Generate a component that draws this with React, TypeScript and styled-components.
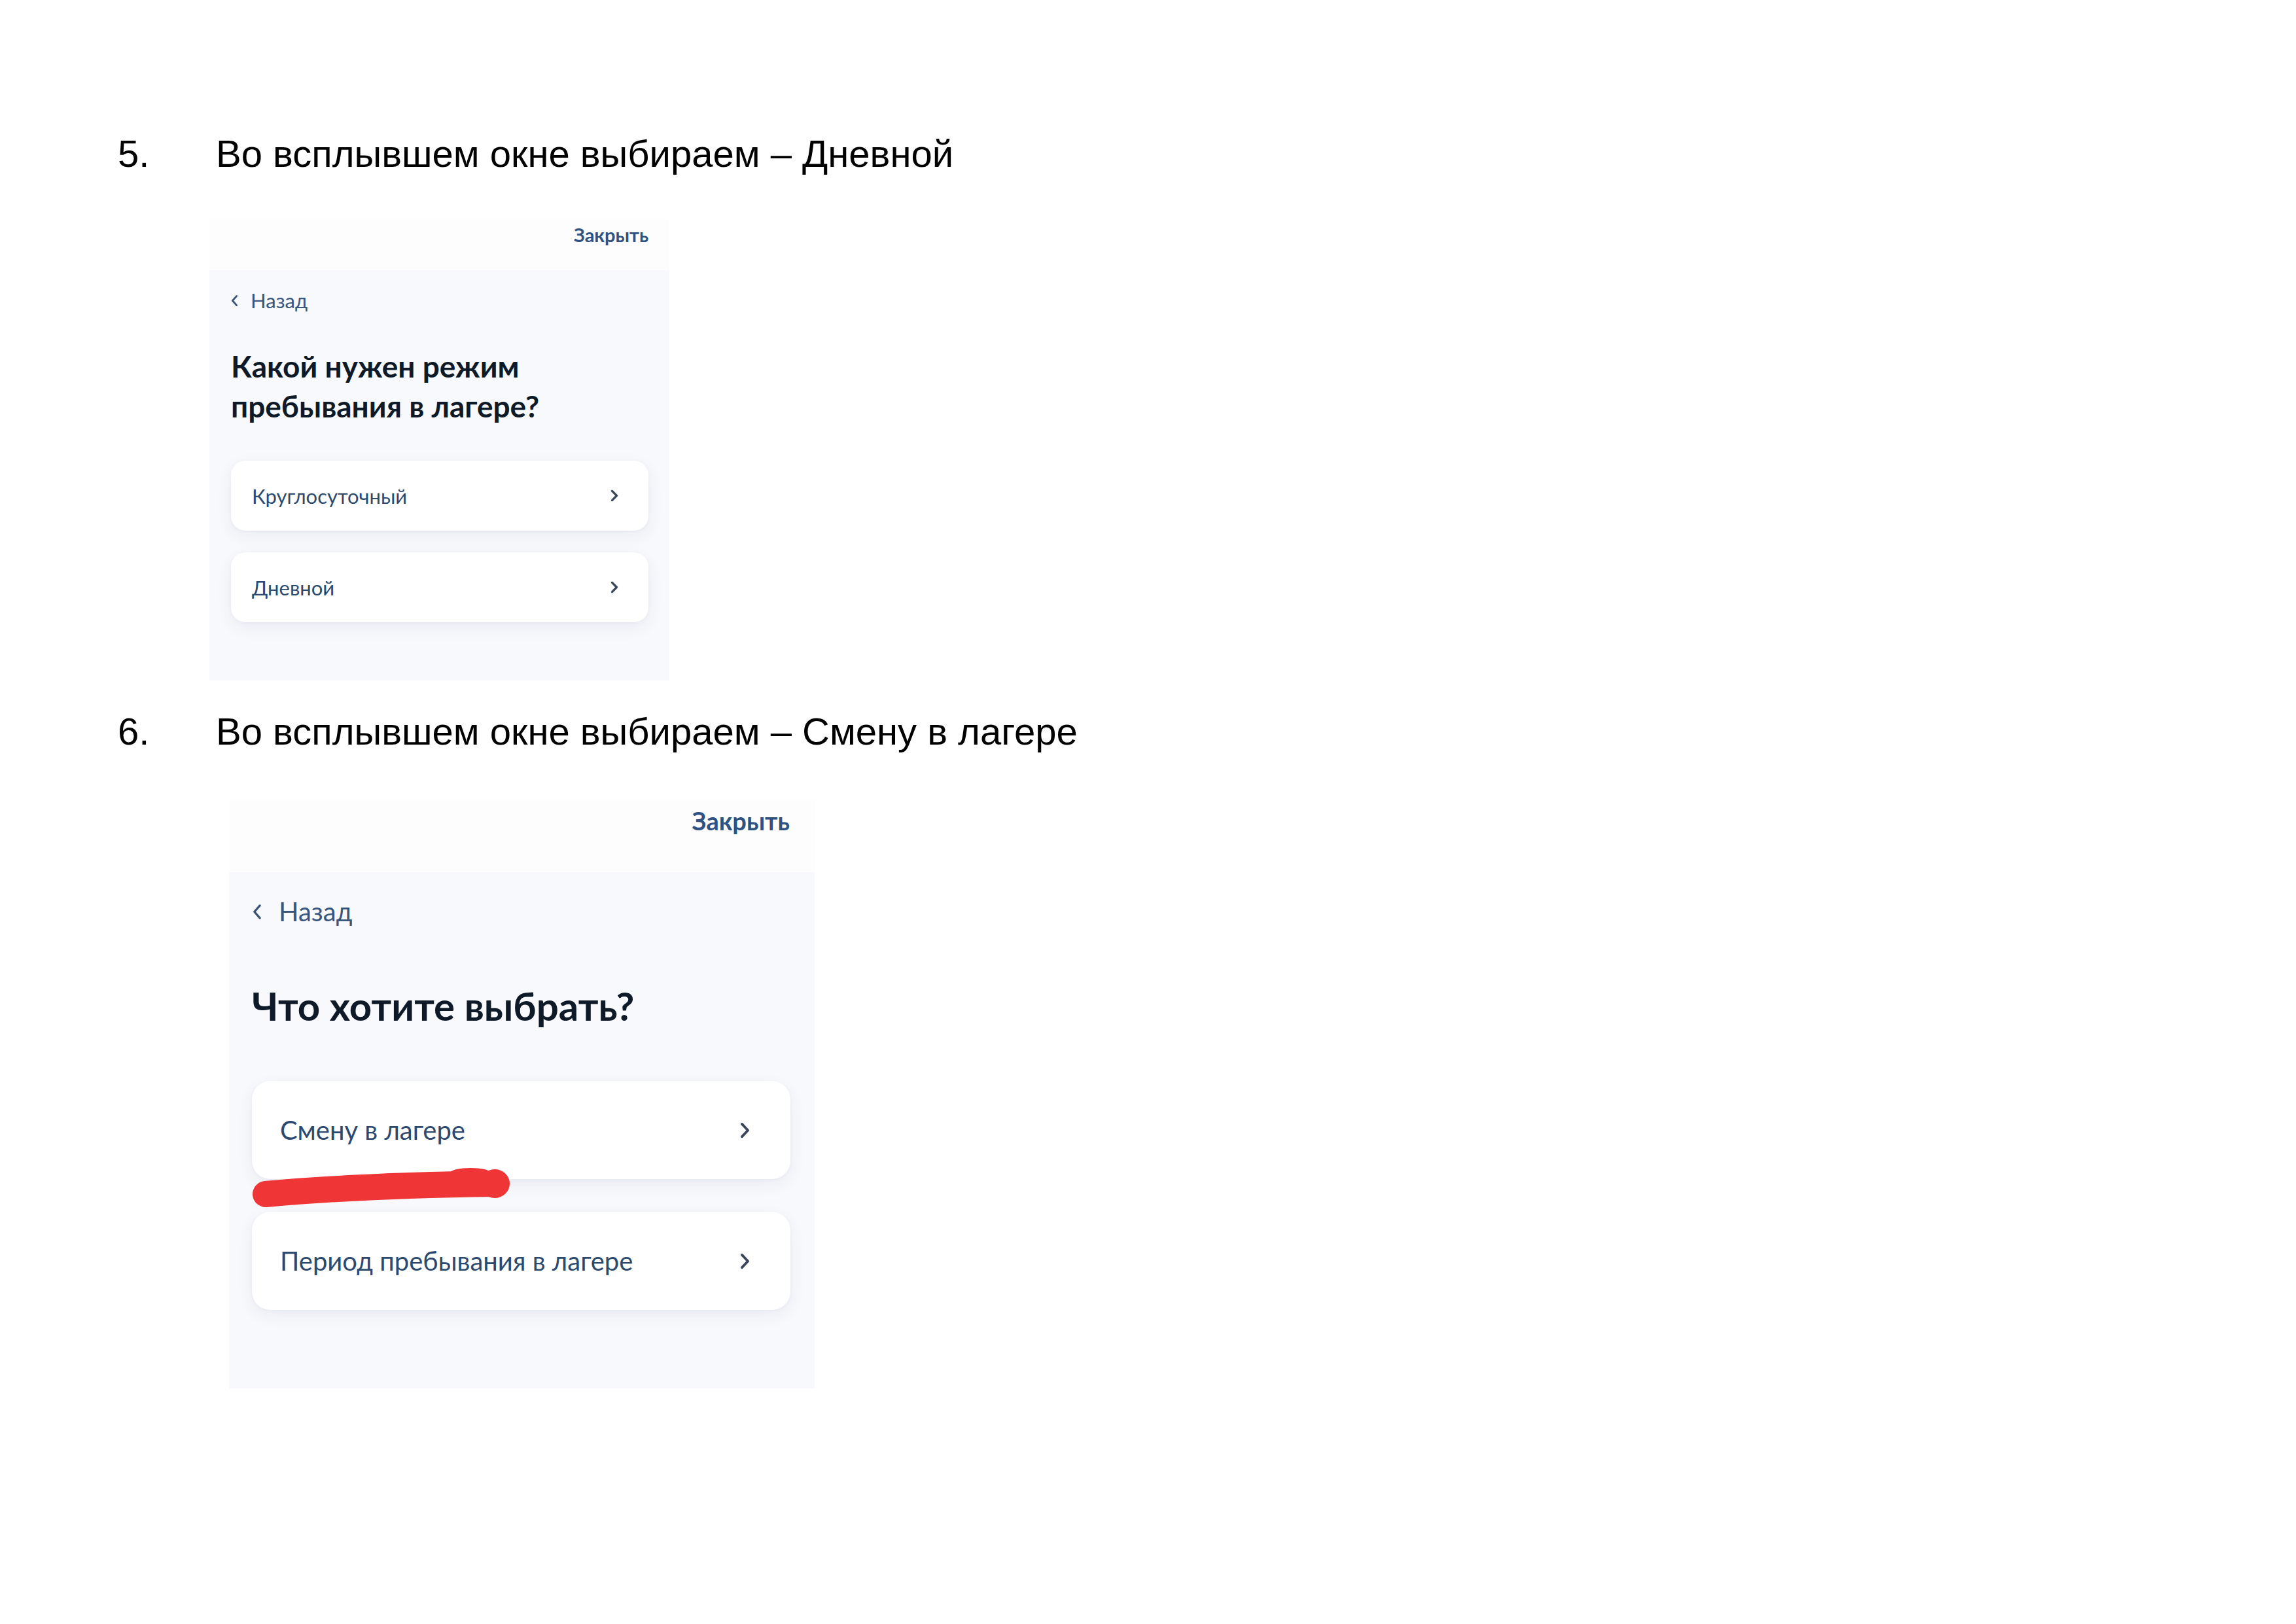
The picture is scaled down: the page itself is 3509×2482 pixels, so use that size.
import React from "react";
import styled, { createGlobalStyle, ThemeProvider } from "styled-components";

const GlobalStyle = createGlobalStyle`
  html, body {
    margin: 0;
    padding: 0;
    background: #ffffff;
  }
  body {
    font-family: "Liberation Sans", Arial, sans-serif;
  }
`;

interface SheetTheme {
  width: number;
  height: number;
  headerH: number;
  headerPadTop: number;
  closeSize: number;
  closeLine: number;
  closeRight: number;
  padLeft: number;
  padRight: number;
  backPadTop: number;
  backSize: number;
  backLine: number;
  backIndent: number;
  backGap: number;
  backIconW: number;
  backIconH: number;
  titleGap: number;
  titleSize: number;
  titleLine: number;
  listGap: number;
  cardH: number;
  cardGap: number;
  cardRadius: number;
  cardPadLeft: number;
  cardPadRight: number;
  cardTextSize: number;
  chevronW: number;
  chevronH: number;
  strokeW: number;
}

const small: SheetTheme = {
  width: 703,
  height: 705,
  headerH: 78,
  headerPadTop: 6,
  closeSize: 29,
  closeLine: 36,
  closeRight: 32,
  padLeft: 33,
  padRight: 32,
  backPadTop: 26,
  backSize: 31,
  backLine: 40,
  backIndent: 1,
  backGap: 20,
  backIconW: 9,
  backIconH: 17,
  titleGap: 50,
  titleSize: 46,
  titleLine: 61,
  listGap: 53,
  cardH: 107,
  cardGap: 33,
  cardRadius: 22,
  cardPadLeft: 32,
  cardPadRight: 47,
  cardTextSize: 31,
  chevronW: 10,
  chevronH: 17,
  strokeW: 3.3,
};

const large: SheetTheme = {
  width: 895,
  height: 900,
  headerH: 111,
  headerPadTop: 9,
  closeSize: 38,
  closeLine: 46,
  closeRight: 38,
  padLeft: 35,
  padRight: 37,
  backPadTop: 35,
  backSize: 40,
  backLine: 50,
  backIndent: 2,
  backGap: 27,
  backIconW: 12,
  backIconH: 23,
  titleGap: 83,
  titleSize: 60,
  titleLine: 72,
  listGap: 79,
  cardH: 150,
  cardGap: 50,
  cardRadius: 28,
  cardPadLeft: 43,
  cardPadRight: 63,
  cardTextSize: 40,
  chevronW: 13,
  chevronH: 23,
  strokeW: 3.9,
};

/* ---------- document layout ---------- */

const Page = styled.main`
  display: flex;
  flex-direction: column;
  padding: 202px 0 200px 180px;
`;

const Step = styled.section<{ $gap: number; $top: number }>`
  display: flex;
  flex-direction: column;
  gap: ${(p) => p.$gap}px;
  margin-top: ${(p) => p.$top}px;
`;

const StepHeading = styled.h2`
  margin: 0;
  display: grid;
  grid-template-columns: 150px auto;
  font-family: "Liberation Sans", Arial, sans-serif;
  font-weight: 400;
  font-size: 58px;
  line-height: 66px;
  color: #000000;
`;

const Figure = styled.div<{ $indent: number }>`
  margin-left: ${(p) => p.$indent}px;
`;

/* ---------- phone sheet ---------- */

const Sheet = styled.div`
  width: ${(p) => p.theme.width}px;
  height: ${(p) => p.theme.height}px;
  display: flex;
  flex-direction: column;
  background: #f8f9fc;
  font-family: Lato, "Noto Sans", sans-serif;
`;

const SheetHeader = styled.header`
  height: ${(p) => p.theme.headerH}px;
  flex: none;
  display: flex;
  justify-content: flex-end;
  align-items: flex-start;
  box-sizing: border-box;
  padding: ${(p) => p.theme.headerPadTop}px ${(p) => p.theme.closeRight}px 0 0;
  background: #fdfdfe;
`;

const CloseLink = styled.span`
  font-weight: 700;
  font-size: ${(p) => p.theme.closeSize}px;
  line-height: ${(p) => p.theme.closeLine}px;
  color: #2e5282;
`;

const SheetBody = styled.div`
  flex: 1;
  display: flex;
  flex-direction: column;
  padding: ${(p) => p.theme.backPadTop}px ${(p) => p.theme.padRight}px 0 ${(p) => p.theme.padLeft}px;
`;

const BackLink = styled.div`
  display: flex;
  align-items: center;
  gap: ${(p) => p.theme.backGap}px;
  padding-left: ${(p) => p.theme.backIndent}px;
  font-weight: 400;
  font-size: ${(p) => p.theme.backSize}px;
  line-height: ${(p) => p.theme.backLine}px;
  color: #36567e;
`;

const Title = styled.h3`
  margin: ${(p) => p.theme.titleGap}px 0 0;
  font-weight: 700;
  font-size: ${(p) => p.theme.titleSize}px;
  line-height: ${(p) => p.theme.titleLine}px;
  color: #0e1a28;
  white-space: pre-line;
`;

const OptionList = styled.div`
  position: relative;
  margin-top: ${(p) => p.theme.listGap}px;
  display: flex;
  flex-direction: column;
  gap: ${(p) => p.theme.cardGap}px;
`;

const OptionCard = styled.div`
  height: ${(p) => p.theme.cardH}px;
  box-sizing: border-box;
  display: flex;
  align-items: center;
  justify-content: space-between;
  padding: 0 ${(p) => p.theme.cardPadRight}px 0 ${(p) => p.theme.cardPadLeft}px;
  background: #ffffff;
  border-radius: ${(p) => p.theme.cardRadius}px;
  box-shadow: 0 8px 24px rgba(30, 50, 110, 0.07), 0 1px 5px rgba(30, 50, 110, 0.04);
  font-size: ${(p) => p.theme.cardTextSize}px;
  color: #2c4a70;
`;

const Chevron = styled.svg`
  flex: none;
  overflow: visible;
`;

const Marker = styled.svg`
  position: absolute;
  left: -1px;
  top: 132px;
  overflow: visible;
`;

function ChevronIcon({ dir, w, h, sw, color }: { dir: "left" | "right"; w: number; h: number; sw: number; color: string }) {
  const pts = dir === "right" ? "1.5,1.5 8.5,9 1.5,16.5" : "8.5,1.5 1.5,9 8.5,16.5";
  return (
    <Chevron width={w} height={h} viewBox="0 0 10 18" preserveAspectRatio="none">
      <polyline
        points={pts}
        fill="none"
        stroke={color}
        strokeWidth={sw}
        strokeLinecap="round"
        strokeLinejoin="round"
        vectorEffect="non-scaling-stroke"
      />
    </Chevron>
  );
}

function RedMark() {
  return (
    <Marker width={400} height={62} viewBox="0 0 400 62">
      <path
        d="M 22 41 C 110 33, 220 27, 374 25"
        fill="none"
        stroke="#ef3535"
        strokeWidth={40}
        strokeLinecap="round"
      />
      <ellipse cx={372} cy={25} rx={23} ry={22} fill="#ef3535" />
      <ellipse cx={170} cy={24} rx={30} ry={9} fill="#ef3535" />
      <ellipse cx={335} cy={8} rx={30} ry={7} fill="#ef3535" />
    </Marker>
  );
}

interface SheetProps {
  theme: SheetTheme;
  title: string;
  options: string[];
  marked?: boolean;
}

function PopupSheet({ theme, title, options, marked }: SheetProps) {
  return (
    <ThemeProvider theme={theme}>
      <Sheet>
        <SheetHeader>
          <CloseLink>Закрыть</CloseLink>
        </SheetHeader>
        <SheetBody>
          <BackLink>
            <ChevronIcon dir="left" w={theme.backIconW} h={theme.backIconH} sw={theme.strokeW * 0.85} color="#3a5477" />
            Назад
          </BackLink>
          <Title>{title}</Title>
          <OptionList>
            {options.map((o) => (
              <OptionCard key={o}>
                <span>{o}</span>
                <ChevronIcon dir="right" w={theme.chevronW} h={theme.chevronH} sw={theme.strokeW} color="#394759" />
              </OptionCard>
            ))}
            {marked && <RedMark />}
          </OptionList>
        </SheetBody>
      </Sheet>
    </ThemeProvider>
  );
}

export default function App() {
  return (
    <>
      <GlobalStyle />
      <Page>
        <Step $gap={67} $top={0}>
          <StepHeading>
            <span>5.</span>
            <span>Во всплывшем окне выбираем – Дневной</span>
          </StepHeading>
          <Figure $indent={140}>
            <PopupSheet
              theme={small}
              title={"Какой нужен режим\nпребывания в лагере?"}
              options={["Круглосуточный", "Дневной"]}
            />
          </Figure>
        </Step>
        <Step $gap={71} $top={45}>
          <StepHeading>
            <span>6.</span>
            <span>Во всплывшем окне выбираем – Смену в лагере</span>
          </StepHeading>
          <Figure $indent={170}>
            <PopupSheet
              theme={large}
              title="Что хотите выбрать?"
              options={["Смену в лагере", "Период пребывания в лагере"]}
              marked
            />
          </Figure>
        </Step>
      </Page>
    </>
  );
}
